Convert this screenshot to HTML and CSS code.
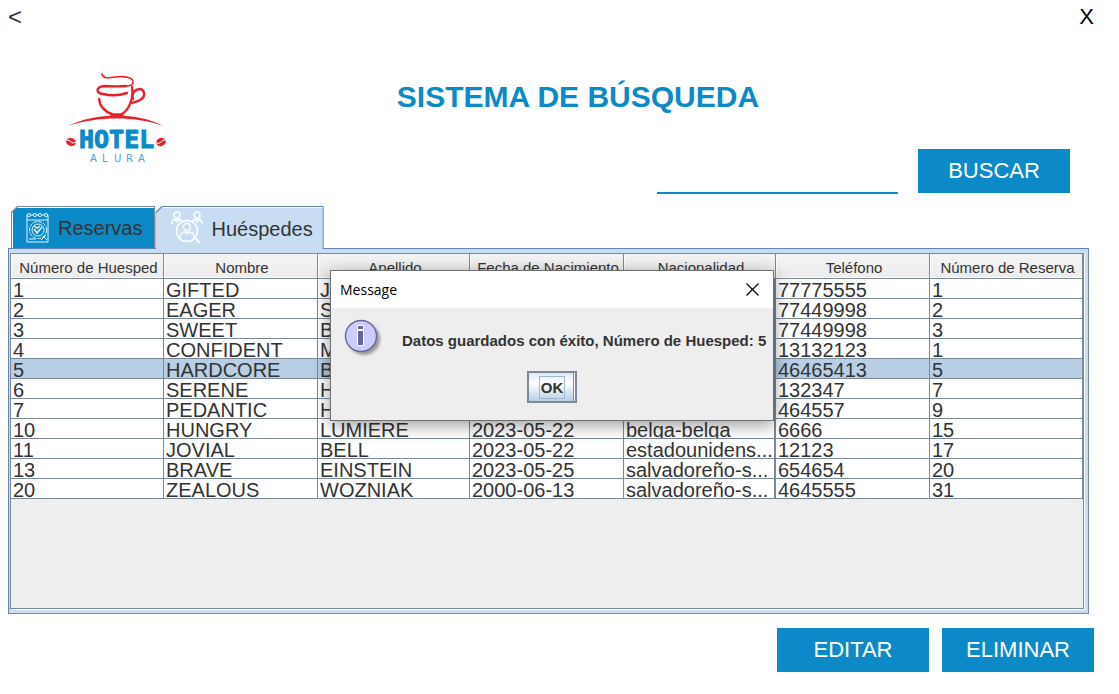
FILE: index.html
```html
<!DOCTYPE html>
<html lang="es">
<head>
<meta charset="utf-8">
<title>Hotel Alura - Sistema de búsqueda</title>
<link rel="stylesheet" href="styles.css">
</head>
<body>
<nav class="topbar">
  <button class="nav-button" type="button" aria-label="Atrás">&lt;</button>
  <button class="nav-button close" type="button" aria-label="Salir">X</button>
</nav>

<header class="header">
  <svg class="logo" viewBox="0 0 100 92" role="img" aria-label="Hotel Alura">
    <g fill="none" stroke="#e8202a" stroke-linecap="round" stroke-linejoin="round">
      <path stroke-width="1.600" d="M36 2C37 7 43 6 50 5C58 4 67 5 67 10C67 13 64 14 60 14"/>
      <path stroke-width="2.400" d="M60 14C52 15 45 14 38 14C30 15 29 21 37 22C45 24 55 23 61 21"/>
      <path stroke-width="2.400" d="M33 27C34 35 40 40 46 42M66 15C68 26 63 38 56 42"/>
      <path stroke-width="2.400" d="M67 27C65 20 70 17 74 17C79 18 80 25 74 28C71 30 68 30 66 31"/>
      <path stroke-width="3.500" d="M46 43H56"/>
    </g>
    <path fill="#e8202a" d="M2 54C30 40 72 40 97 54C72 44 30 44 2 54Z"/>
    <g fill="#e8202a">
      <ellipse cx="5" cy="70" rx="5" ry="4" transform="rotate(15 5 70)"/>
      <ellipse cx="95" cy="70" rx="5" ry="4" transform="rotate(-25 95 70)"/>
    </g>
    <path fill="none" stroke="#fff" stroke-width="1" d="M0 68Q4 68 5 70Q7 72 10 70M90 71Q94 72 95 70Q97 67 100 68"/>
    <text class="logo-name" x="13" y="76">HOTEL</text>
    <text class="logo-sub" x="24 36 48 60 72" y="90">ALURA</text>
  </svg>
  <div class="header-main">
    <h1 class="title">SISTEMA DE BÚSQUEDA</h1>
    <form class="search">
      <input class="search-input" type="text" aria-label="Buscar">
      <button class="action" type="button">BUSCAR</button>
    </form>
  </div>
</header>

<main class="content">
  <div class="tabs" role="tablist">
    <button class="tab tab-reservas" type="button" role="tab" aria-selected="false">
      <svg class="tab-icon" viewBox="0 0 32 32" aria-hidden="true">
        <g fill="none" stroke="#e4f2fa" stroke-width="1">
          <path d="M5 2V29H26V2M5 7H26"/>
          <circle cx="7" cy="2" r="1.600"/><circle cx="13" cy="2" r="1.600"/><circle cx="18" cy="2" r="1.600"/><circle cx="24" cy="2" r="1.600"/>
          <path d="M8.600 2H11.400M14.600 2H16.400M19.600 2H22.400"/>
          <circle cx="16" cy="17" r="8.500" stroke-dasharray="4 1"/>
          <circle cx="16" cy="17" r="6"/>
          <path stroke-width="1.500" d="M12 16L15 20L20 14M12 13L15 15L18 13"/>
          <path d="M21 23L25 27M19 27L24 22M7 26H14"/>
        </g>
      </svg>
      <span>Reservas</span>
    </button>
    <button class="tab tab-huespedes" type="button" role="tab" aria-selected="true">
      <svg class="tab-icon" viewBox="0 0 32 32" aria-hidden="true">
        <g fill="none" stroke="#fff" stroke-width="1.400">
          <circle cx="6" cy="2" r="3"/><circle cx="26" cy="2" r="3"/>
          <path d="M1 11V9Q2 6 6 6Q9 6 11 8M31 11V9Q30 6 26 6Q23 6 21 8M4 7L6 9L8 7M24 7L26 9L28 7"/>
          <circle cx="16" cy="18" r="10.500"/>
          <circle cx="16" cy="14" r="3.500"/>
          <path d="M9 25V23Q10 19 14 19L16 21L18 19Q22 19 23 23V25"/>
          <path stroke-width="2" d="M24 25L29 30"/>
        </g>
      </svg>
      <span>Huéspedes</span>
    </button>
  </div>

  <section class="panel" role="tabpanel" aria-label="Huéspedes">
    <div class="viewport">
      <table class="grid">
        <colgroup><col class="c1"><col class="c2"><col class="c3"><col class="c2"><col class="c3"><col class="c2"><col></colgroup>
        <thead>
          <tr><th>Número de Huesped</th><th>Nombre</th><th>Apellido</th><th>Fecha de Nacimiento</th><th>Nacionalidad</th><th>Teléfono</th><th>Número de Reserva</th></tr>
        </thead>
        <tbody>
          <tr><td><span>1</span></td><td><span>GIFTED</span></td><td><span>JA</span></td><td></td><td></td><td><span>77775555</span></td><td><span>1</span></td></tr>
          <tr><td><span>2</span></td><td><span>EAGER</span></td><td><span>S</span></td><td></td><td></td><td><span>77449998</span></td><td><span>2</span></td></tr>
          <tr><td><span>3</span></td><td><span>SWEET</span></td><td><span>B</span></td><td></td><td></td><td><span>77449998</span></td><td><span>3</span></td></tr>
          <tr><td><span>4</span></td><td><span>CONFIDENT</span></td><td><span>M</span></td><td></td><td></td><td><span>13132123</span></td><td><span>1</span></td></tr>
          <tr class="selected"><td><span>5</span></td><td><span>HARDCORE</span></td><td><span>B</span></td><td></td><td></td><td><span>46465413</span></td><td><span>5</span></td></tr>
          <tr><td><span>6</span></td><td><span>SERENE</span></td><td><span>H</span></td><td></td><td></td><td><span>132347</span></td><td><span>7</span></td></tr>
          <tr><td><span>7</span></td><td><span>PEDANTIC</span></td><td><span>H</span></td><td></td><td></td><td><span>464557</span></td><td><span>9</span></td></tr>
          <tr><td><span>10</span></td><td><span>HUNGRY</span></td><td><span>LUMIERE</span></td><td><span>2023-05-22</span></td><td><span>belga-belga</span></td><td><span>6666</span></td><td><span>15</span></td></tr>
          <tr><td><span>11</span></td><td><span>JOVIAL</span></td><td><span>BELL</span></td><td><span>2023-05-22</span></td><td><span>estadounidens...</span></td><td><span>12123</span></td><td><span>17</span></td></tr>
          <tr><td><span>13</span></td><td><span>BRAVE</span></td><td><span>EINSTEIN</span></td><td><span>2023-05-25</span></td><td><span>salvadoreño-s...</span></td><td><span>654654</span></td><td><span>20</span></td></tr>
          <tr><td><span>20</span></td><td><span>ZEALOUS</span></td><td><span>WOZNIAK</span></td><td><span>2000-06-13</span></td><td><span>salvadoreño-s...</span></td><td><span>4645555</span></td><td><span>31</span></td></tr>
        </tbody>
      </table>
    </div>
  </section>
</main>

<footer class="actions">
  <button class="action" type="button">EDITAR</button>
  <button class="action" type="button">ELIMINAR</button>
</footer>

<div class="dialog" role="dialog" aria-labelledby="dialog-title">
  <div class="dialog-bar">
    <span id="dialog-title">Message</span>
    <button class="dialog-close" type="button" aria-label="Cerrar">
      <svg viewBox="0 0 13 13" aria-hidden="true"><path d="M.5.5L12.500 12.500M12.500.5L.5 12.500" stroke="#000" stroke-width="1.200"/></svg>
    </button>
  </div>
  <div class="dialog-body">
    <svg class="info" viewBox="0 0 40 40" aria-hidden="true">
      <defs><filter id="soft"><feGaussianBlur stdDeviation="1.500"/></filter></defs>
      <circle cx="20" cy="20" r="16" fill="#999" filter="url(#soft)"/>
      <circle cx="17" cy="17" r="15.500" fill="#ccf" stroke="#669" stroke-width="1.400"/>
      <path fill="#669" stroke="#fff" stroke-width="1" d="M13.500 6.500H19.500V10.500H13.500ZM13.500 11.500H19.500V26.500H13.500Z"/>
    </svg>
    <p class="message">Datos guardados con éxito, Número de Huesped: 5</p>
    <button class="ok" type="button"><span>OK</span></button>
  </div>
</div>
</body>
</html>
```
FILE: styles.css
```css
* {
  box-sizing: border-box;
}

body {
  margin: 0;
  min-height: 100vh;
  display: flex;
  flex-direction: column;
  background: #fff;
  color: #333;
  font-family: "Liberation Sans", Arial, sans-serif;
}

button {
  padding: 0;
  border: 0;
  background: none;
  color: inherit;
  font: inherit;
}

.topbar {
  display: flex;
  justify-content: space-between;
  padding: 0 25px 0 8px;
}

.nav-button {
  height: 34px;
  font-size: 24px;
}

.nav-button.close {
  color: #000;
  font-size: 22px;
}

.header {
  display: grid;
  grid-template-columns: 100px 1fr;
  padding: 38px 49px 12px 66px;
}

.logo {
  width: 100px;
  height: 92px;
}

.logo-name {
  fill: #0c8ac7;
  stroke: #0c8ac7;
  stroke-width: 1;
  font: bold 25px "DejaVu Sans Mono", monospace;
}

.logo-sub {
  fill: #45a6d8;
  font: 10px "DejaVu Sans", sans-serif;
}

.title {
  margin: 0;
  padding: 8px 80px 0 0;
  color: #0c8ac7;
  font-size: 30px;
  line-height: 34px;
  text-align: center;
}

.search {
  display: flex;
  justify-content: flex-end;
  gap: 20px;
  padding-top: 35px;
}

.search-input {
  width: 241px;
  height: 45px;
  padding: 0 4px;
  border: 0;
  border-bottom: 2px solid #0c8ac7;
  background: transparent;
  font: inherit;
  font-size: 20px;
  outline: none;
}

.action {
  width: 152px;
  height: 44px;
  background: #0c8ac7;
  color: #fff;
  font-size: 22px;
}

.content {
  flex: 1;
  display: flex;
  flex-direction: column;
  padding: 0 30px 0 8px;
}

.tabs {
  display: flex;
  align-items: flex-end;
  padding-left: 3px;
}

.tab {
  position: relative;
  isolation: isolate;
  display: flex;
  align-items: center;
  gap: 4px;
  height: 42px;
  padding: 3px 13px 0 11px;
  background: #7a8a99;
  clip-path: polygon(6px 0, 100% 0, 100% 100%, 0 100%, 0 6px);
  font-size: 20px;
}

.tab::before {
  content: "";
  position: absolute;
  z-index: -1;
  inset: 1px 1px 0;
  border: solid #fff;
  border-width: 1px 0 0 1px;
  background: #0c8ac7;
  clip-path: polygon(6px 0, 100% 0, 100% 100%, 0 100%, 0 6px);
}

.tab-huespedes {
  z-index: 1;
  height: 43px;
  margin-bottom: -1px;
  padding: 3px 11px 0 16px;
  gap: 8px;
  background: #6382bf;
}

.tab-huespedes::before {
  background: #c8ddf2;
}

.tab-icon {
  width: 32px;
  height: 32px;
  overflow: visible;
}

.panel {
  flex: 1;
  display: flex;
  padding: 4px;
  padding-left: 1px;
  border: 1px solid #6382bf;
  border-right-color: #7a8a99;
  border-bottom-color: #7a8a99;
  background: #c8ddf2;
}

.viewport {
  flex: 1;
  min-width: 0;
  border: 1px solid #7a8a99;
  background: #eee;
  box-shadow: 1px 1px #fff;
}

.grid {
  width: 100%;
  table-layout: fixed;
  border-collapse: separate;
  border-spacing: 0;
}

.c1 { width: 153px; }
.c2 { width: 154px; }
.c3 { width: 152px; }

.grid th,
.grid td {
  padding: 0;
  border: solid #7a8a99;
  border-width: 0 1px 1px 0;
}

.grid th {
  height: 25px;
  padding: 3px 0 0 3px;
  background: linear-gradient(#f4f4f4, #ececec);
  box-shadow: inset 1px -1px #fff;
  font-size: 15px;
  font-weight: normal;
  line-height: 20px;
  white-space: nowrap;
}

.grid td {
  height: 20px;
  background: #fff;
  font-size: 20px;
}

.grid td:nth-child(5) {
  border-right-width: 2px;
}

.grid td span {
  display: block;
  height: 19px;
  padding-left: 2px;
  line-height: 22px;
  overflow: hidden;
  white-space: nowrap;
}

.grid .selected td {
  background: #b8cfe5;
}

.actions {
  display: flex;
  justify-content: flex-end;
  gap: 13px;
  padding: 14px 25px 22px;
}

.dialog {
  position: absolute;
  z-index: 2;
  top: 270px;
  left: 330px;
  width: 444px;
  border: 1px solid #707070;
  background: #eee;
  box-shadow: 0 4px 16px rgba(0, 0, 0, 0.4);
}

.dialog-bar {
  display: flex;
  justify-content: space-between;
  align-items: center;
  height: 37px;
  padding: 0 14px 0 9px;
  background: #fff;
  color: #000;
  font-family: "Open Sans", sans-serif;
  font-size: 14px;
}

.dialog-close {
  display: flex;
}

.dialog-close svg {
  width: 13px;
  height: 13px;
}

.dialog-body {
  display: grid;
  grid-template-columns: 40px minmax(0, 1fr);
  column-gap: 18px;
  row-gap: 12px;
  padding: 11px 13px 17px;
}

.info {
  width: 40px;
  height: 40px;
}

.message {
  margin: 0;
  padding-top: 3px;
  align-self: center;
  font-size: 15px;
  font-weight: bold;
  line-height: 20px;
  white-space: nowrap;
}

.ok {
  grid-column: 1 / -1;
  justify-self: center;
  width: 50px;
  height: 32px;
  border: 2px solid #7a8a99;
  background: linear-gradient(#dde8f3, #fff 35%, #b8cfe5);
  box-shadow: inset -1px 0 #fff, inset -2px 0 #7a8a99;
  font-size: 15px;
  font-weight: bold;
}

.ok span {
  display: inline-block;
  padding: 2px 1px;
  border: 1px solid #a3b8cc;
  line-height: 17px;
}
```
